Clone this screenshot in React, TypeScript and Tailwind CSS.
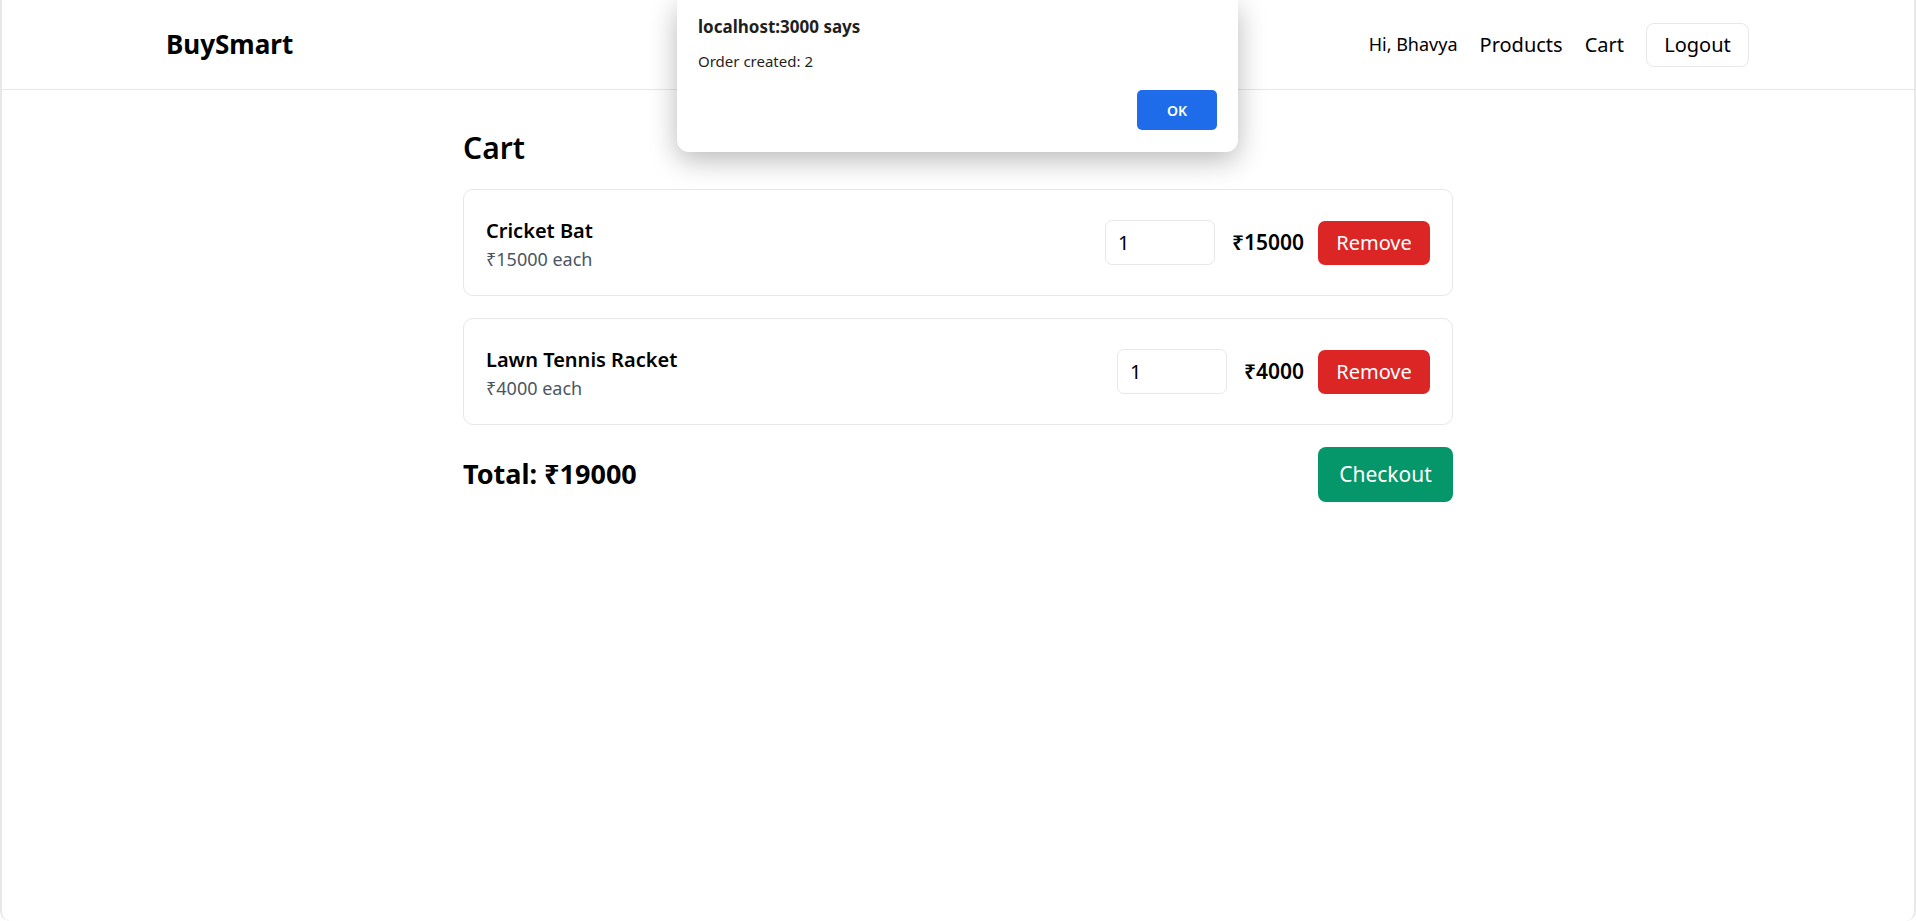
import React from 'react';

interface CartItem {
  id: number;
  name: string;
  price: number;
  qty: number;
}

const items: CartItem[] = [
  { id: 1, name: 'Cricket Bat', price: 15000, qty: 1 },
  { id: 2, name: 'Lawn Tennis Racket', price: 4000, qty: 1 },
];

const font = { fontFamily: '"Noto Sans", "Open Sans", "DejaVu Sans", sans-serif' };

const CartRow: React.FC<{ item: CartItem }> = ({ item }) => (
  <div className="h-[107px] border border-[#e5e7eb] rounded-[10px] flex items-center justify-between px-[22px]">
    <div className="pt-[5px]">
      <div className="text-[20px] leading-[29px] font-semibold text-black">{item.name}</div>
      <div className="text-[18px] leading-[29px] text-[#4b5563]">₹{item.price} each</div>
    </div>
    <div className="flex items-center">
      <input
        type="number"
        defaultValue={item.qty}
        className="w-[110px] h-[45px] border border-[#e5e7eb] rounded-[7px] px-[12px] text-[20px] text-black outline-none"
      />
      <span className="ml-[17px] text-[21px] font-semibold text-black">₹{item.price * item.qty}</span>
      <button className="ml-[14px] w-[112px] h-[44px] bg-[#dc2626] text-white text-[20px] rounded-[7px]">
        Remove
      </button>
    </div>
  </div>
);

export default function App() {
  const total = items.reduce((s, i) => s + i.price * i.qty, 0);

  return (
    <div className="relative h-[921px] bg-white border-x-2 border-[#e8e8e8] rounded-b-[10px] overflow-hidden" style={font}>
      {/* Header */}
      <header className="h-[90px] border-b border-[#e5e7eb] flex items-center justify-between pl-[164px] pr-[165px]">
        <div className="text-[26px] font-bold text-black">BuySmart</div>
        <nav className="flex items-center gap-[22px]">
          <span className="text-[18px] text-black">Hi, Bhavya</span>
          <a className="text-[20px] text-black">Products</a>
          <a className="text-[20px] text-black">Cart</a>
          <button className="w-[103px] h-[44px] border border-[#e5e7eb] rounded-[8px] bg-white text-[20px] text-black">
            Logout
          </button>
        </nav>
      </header>

      {/* Cart */}
      <main className="w-[990px] mx-auto pt-[38px]">
        <h1 className="text-[30px] leading-[40px] font-semibold text-black mb-[21px]">Cart</h1>
        <div className="flex flex-col gap-[22px]">
          {items.map((item) => (
            <CartRow key={item.id} item={item} />
          ))}
        </div>
        <div className="mt-[22px] flex items-center justify-between">
          <div className="text-[27px] font-bold text-black">Total: ₹{total}</div>
          <button className="w-[135px] h-[55px] bg-[#059669] text-white text-[21px] rounded-[8px]">
            Checkout
          </button>
        </div>
      </main>

      {/* Browser alert */}
      <div className="absolute left-[675px] top-0 w-[561px] h-[152px] bg-white rounded-b-[12px] shadow-[0_8px_28px_rgba(0,0,0,0.28)] px-[21px] pt-[15px]">
        <div className="text-[17px] font-bold text-[#1f1f1f] leading-[24px]">localhost:3000 says</div>
        <div className="mt-[11px] text-[15px] text-[#1f1f1f] leading-[22px]">Order created: 2</div>
        <div className="flex justify-end mt-[18px]">
          <button className="w-[80px] h-[40px] bg-[#1f6ceb] text-white text-[14px] font-semibold rounded-[5px]">OK</button>
        </div>
      </div>
    </div>
  );
}
